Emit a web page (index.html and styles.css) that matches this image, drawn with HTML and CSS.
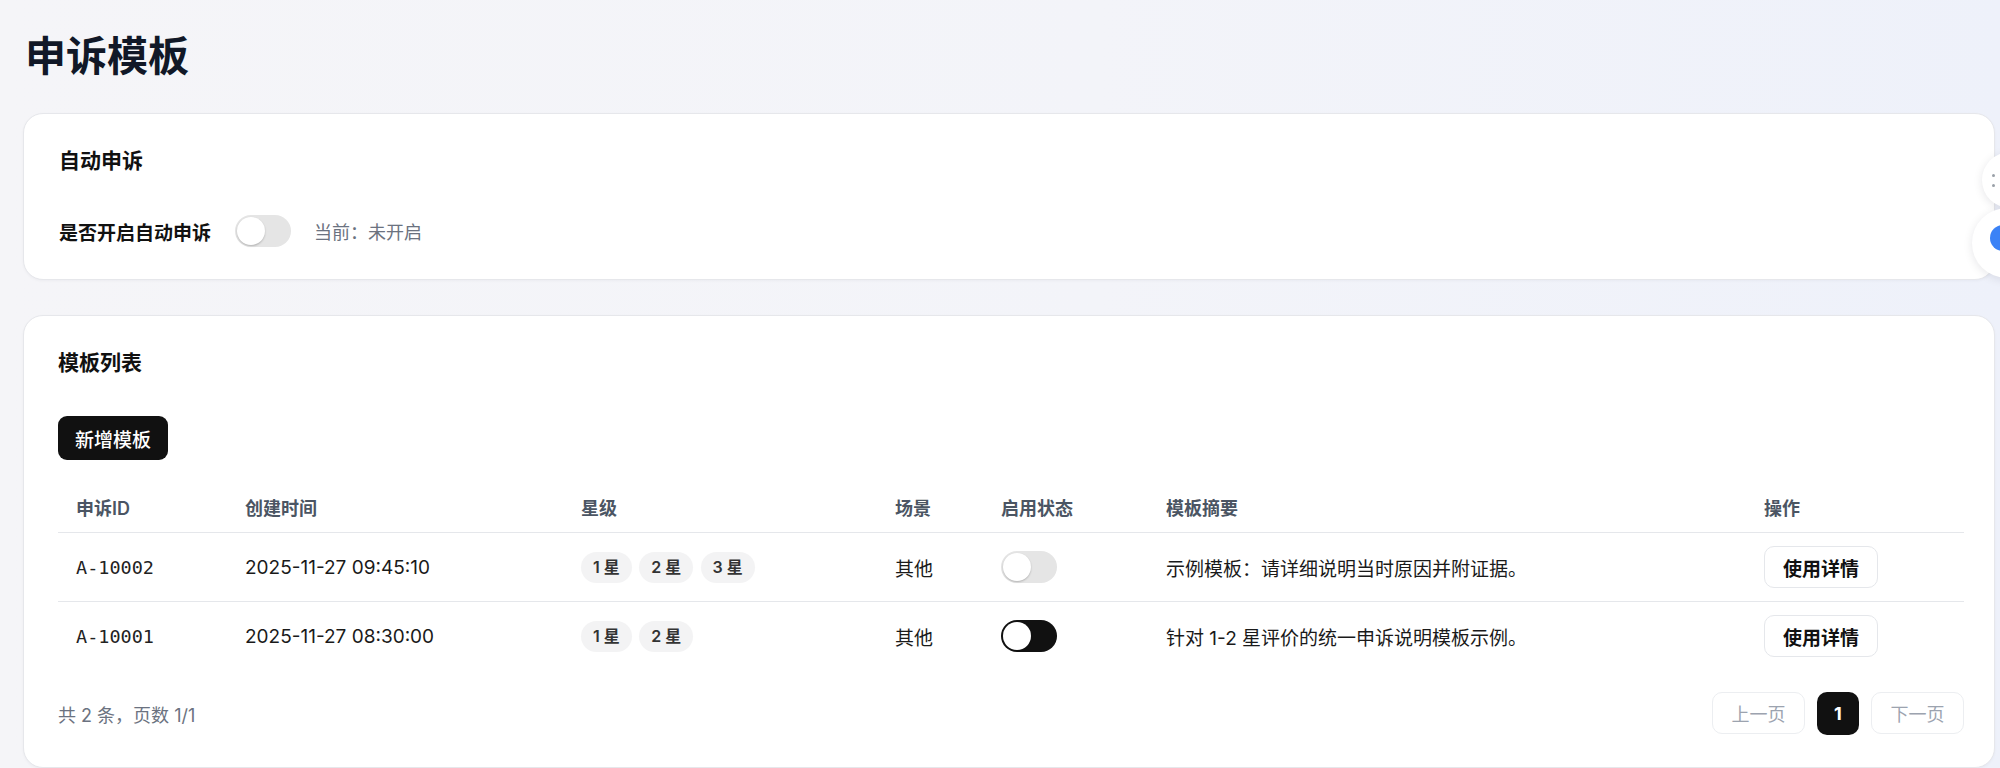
FILE: index.html
```html
<!DOCTYPE html>
<html lang="zh-CN">
<head>
    <meta charset="UTF-8">
    <meta name="viewport" content="width=device-width, initial-scale=1.0">
    <title>申诉模板</title>
    <link rel="stylesheet" href="styles.css">
</head>
<body>

    <div class="page">
        <h1 class="page-title">申诉模板</h1>

        <section class="card card-auto">
            <h2 class="card-title">自动申诉</h2>
            <div class="auto-row">
                <span class="auto-label">是否开启自动申诉</span>
                <span class="switch"><span class="knob"></span></span>
                <span class="auto-status">当前：未开启</span>
            </div>
        </section>

        <section class="card card-list">
            <h2 class="card-title">模板列表</h2>
            <button class="btn-primary">新增模板</button>

            <table class="tpl-table">
                <colgroup>
                    <col class="c-id">
                    <col class="c-time">
                    <col class="c-star">
                    <col class="c-scene">
                    <col class="c-status">
                    <col class="c-summary">
                    <col class="c-op">
                </colgroup>
                <thead>
                    <tr>
                        <th>申诉ID</th>
                        <th>创建时间</th>
                        <th>星级</th>
                        <th>场景</th>
                        <th>启用状态</th>
                        <th>模板摘要</th>
                        <th>操作</th>
                    </tr>
                </thead>
                <tbody>
                    <tr>
                        <td class="mono">A-10002</td>
                        <td>2025-11-27 09:45:10</td>
                        <td>
                            <span class="pill">1 星</span>
                            <span class="pill">2 星</span>
                            <span class="pill">3 星</span>
                        </td>
                        <td>其他</td>
                        <td><span class="switch"><span class="knob"></span></span></td>
                        <td>示例模板：请详细说明当时原因并附证据。</td>
                        <td><button class="btn-outline">使用详情</button></td>
                    </tr>
                    <tr>
                        <td class="mono">A-10001</td>
                        <td>2025-11-27 08:30:00</td>
                        <td>
                            <span class="pill">1 星</span>
                            <span class="pill">2 星</span>
                        </td>
                        <td>其他</td>
                        <td><span class="switch on"><span class="knob"></span></span></td>
                        <td>针对 1-2 星评价的统一申诉说明模板示例。</td>
                        <td><button class="btn-outline">使用详情</button></td>
                    </tr>
                </tbody>
            </table>

            <div class="list-footer">
                <span class="total">共 2 条，页数 1/1</span>
                <div class="pager">
                    <button class="pg-btn disabled">上一页</button>
                    <button class="pg-num">1</button>
                    <button class="pg-btn disabled">下一页</button>
                </div>
            </div>
        </section>
    </div>

    <!-- 右侧悬浮工具 -->
    <div class="float-dot float-more"><span></span><span></span></div>
    <div class="float-dot float-assist"><i></i></div>

</body>
</html>
```

FILE: styles.css
```css
body, h1, h2, table, th, td {
  margin: 0;
  padding: 0;
}

body {
  min-height: 768px;
  background: linear-gradient(90deg, #f5f5f8 0%, #f3f4f9 55%, #eef1fa 100%);
  font-family: "Inter", "Noto Sans CJK SC", sans-serif;
  color: #1a1a1a;
  overflow: hidden;
}

button {
  font-family: inherit;
  cursor: pointer;
}

.page {
  padding: 32px 5px 0 23px;
}

.page-title {
  font-size: 41px;
  line-height: 48px;
  font-weight: 700;
  color: #111827;
  margin: 0 0 33px 2px;
}

.card {
  background: #fff;
  border: 1px solid #e6e7eb;
  border-radius: 20px;
  box-shadow: 0 1px 3px rgba(15, 23, 42, 0.04);
}

.card-title {
  font-size: 21px;
  line-height: 30px;
  font-weight: 600;
  color: #111;
}

/* 自动申诉 */
.card-auto {
  height: 167px;
  box-sizing: border-box;
  padding: 32px 35px 0;
}

.auto-row {
  display: flex;
  align-items: center;
  margin-top: 38px;
  height: 34px;
}

.auto-label {
  font-size: 19px;
  font-weight: 600;
  color: #111;
  margin-right: 24px;
}

.auto-status {
  font-size: 18px;
  color: #6b7280;
  margin-left: 23px;
}

.switch {
  position: relative;
  display: inline-block;
  width: 56px;
  height: 32px;
  border-radius: 16px;
  background: #e5e5e5;
  vertical-align: middle;
}

.switch .knob {
  position: absolute;
  top: 2px;
  left: 2px;
  width: 28px;
  height: 28px;
  border-radius: 50%;
  background: #fff;
  box-shadow: 0 1px 2px rgba(0, 0, 0, 0.22);
}

.switch.on {
  background: #111;
}

/* 模板列表 */
.card-list {
  margin-top: 35px;
  height: 453px;
  box-sizing: border-box;
  padding: 32px 30px 0 34px;
}

.btn-primary {
  display: block;
  margin-top: 38px;
  height: 44px;
  padding: 0 17px;
  border: none;
  border-radius: 9px;
  background: #111;
  color: #fff;
  font-size: 19px;
  font-weight: 500;
}

.tpl-table {
  margin-top: 22px;
  width: 1906px;
  border-collapse: collapse;
  table-layout: fixed;
}

.c-id { width: 169px; }
.c-time { width: 336px; }
.c-star { width: 314px; }
.c-scene { width: 106px; }
.c-status { width: 165px; }
.c-summary { width: 598px; }
.c-op { width: 218px; }

.tpl-table th {
  height: 50px;
  padding: 0 18px;
  text-align: left;
  font-size: 18px;
  font-weight: 600;
  color: #4b5563;
  border-bottom: 1px solid #e5e7eb;
}

.tpl-table td {
  height: 68px;
  padding: 0 18px;
  font-size: 19px;
  color: #1a1a1a;
  white-space: nowrap;
}

.tpl-table tbody tr:first-child td {
  border-bottom: 1px solid #e5e7eb;
}

.tpl-table td.mono {
  font-family: "DejaVu Sans Mono", monospace;
  font-size: 18.5px;
  color: #222;
}

.pill {
  display: inline-block;
  height: 31px;
  line-height: 31px;
  padding: 0 12px;
  margin-right: 2px;
  border-radius: 16px;
  background: #f3f3f4;
  font-size: 16px;
  font-weight: 600;
  color: #333;
}

.btn-outline {
  height: 42px;
  padding: 0 18px;
  border: 1px solid #e5e7eb;
  border-radius: 10px;
  background: #fff;
  font-size: 19px;
  font-weight: 600;
  color: #111;
}

.list-footer {
  display: flex;
  justify-content: space-between;
  align-items: center;
  width: 1906px;
  margin-top: 22px;
}

.total {
  font-size: 18px;
  color: #6b7280;
}

.pager {
  display: flex;
  gap: 12px;
}

.pg-btn {
  width: 93px;
  height: 42px;
  border: 1px solid #eceef1;
  border-radius: 10px;
  background: #fff;
  font-size: 18px;
  color: #9ca3af;
}

.pg-num {
  width: 42px;
  height: 43px;
  border: none;
  border-radius: 10px;
  background: #111;
  color: #fff;
  font-size: 18px;
  font-weight: 700;
}

/* 右侧悬浮按钮 */
.float-dot {
  position: absolute;
  border-radius: 50%;
  background: #fff;
  box-shadow: 0 2px 10px rgba(15, 23, 42, 0.10);
}

.float-more {
  left: 1982px;
  top: 152px;
  width: 56px;
  height: 56px;
}

.float-more span {
  position: absolute;
  left: 10px;
  width: 3px;
  height: 3px;
  border-radius: 50%;
  background: #9aa0a8;
}

.float-more span:first-child { top: 22px; }
.float-more span:last-child { top: 32px; }

.float-assist {
  left: 1972px;
  top: 208px;
  width: 70px;
  height: 70px;
}

.float-assist i {
  position: absolute;
  left: 18px;
  top: 17px;
  width: 26px;
  height: 26px;
  border-radius: 50%;
  background: #3b82f6;
}
```
